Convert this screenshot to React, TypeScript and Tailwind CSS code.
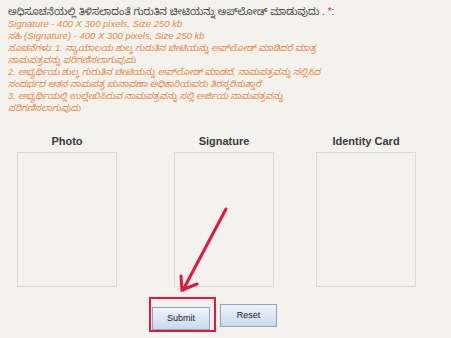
import React from "react";

const line = "whitespace-nowrap text-[9px] italic text-[#e58a4e] h-[12px] leading-[12px]";

export default function App() {
  const kn = { fontFamily: '"Liberation Sans", "Noto Sans Kannada", "Noto Sans", sans-serif' };
  const L = ({ children }: { children: React.ReactNode }) => <span className="text-[9.5px]">{children}</span>;
  return (
    <div className="relative w-[451px] h-[338px] overflow-hidden bg-[#f4f2ec]" style={kn}>
      <div className="pl-[8px] pt-[6px]">
        <div className="whitespace-nowrap text-[10px] text-[#4a4a4a] h-[12px] leading-[12px]">
          ಅಧಿಸೂಚನೆಯಲ್ಲಿ ತಿಳಿಸಲಾದಂತೆ ಗುರುತಿನ ಚೀಟಿಯನ್ನು ಅಪ್‌ಲೋಡ್ ಮಾಡುವುದು . <span className="text-[#d9263a]">*</span>:
        </div>
        <div className={line}><L>Signature - 400 X 300 pixels, Size 250 kb</L></div>
        <div className={line}>ಸಹಿ <L>(Signature) - 400 X 300 pixels, Size 250 kb</L></div>
        <div className={line}>ಸೂಚನೆಗಳು: 1. ನ್ಯಾಯಾಲಯ ಶುಲ್ಕ ಗುರುತಿನ ಚೀಟಿಯನ್ನು ಅಪ್‌ಲೋಡ್ ಮಾಡಿದರೆ ಮಾತ್ರ</div>
        <div className={line}>ನಾಮಪತ್ರವನ್ನು ಪರಿಗಣಿಸಲಾಗುವುದು</div>
        <div className={line}>2. ಅಭ್ಯರ್ಥಿಯ ಶುಲ್ಕ ಗುರುತಿನ ಚೀಟಿಯನ್ನು ಅಪ್‌ಲೋಡ್ ಮಾಡದೆ, ನಾಮಪತ್ರವನ್ನು ಸಲ್ಲಿಸಿದ</div>
        <div className={line}>ಸಂದರ್ಭದ ಆತನ ನಾಮಪತ್ರ ಚುನಾವಣಾ ಅಧಿಕಾರಿಯವರು ತಿರಸ್ಕರಿಸುತ್ತಾರೆ</div>
        <div className={line}>3. ಅಭ್ಯರ್ಥಿಯಲ್ಲಿ ಉಲ್ಲೇಖಿಸಿರುವ ನಾಮಪತ್ರವನ್ನು ಸಲ್ಲಿ ಅರ್ಜಿಯ ನಾಮಪತ್ರವನ್ನು</div>
        <div className={line}>ಪರಿಗಣಿಸಲಾಗುವುದು</div>
      </div>

      <div className="mt-[20px] flex pl-[17px]">
        {[
          { t: "Photo", w: "w-[157px]" },
          { t: "Signature", w: "w-[142px]" },
          { t: "Identity Card", w: "w-[100px]" },
        ].map((c) => (
          <div key={c.t} className={`${c.w} flex flex-col`}>
            <div className="w-[100px] text-center text-[11px] font-bold text-[#3a3a3a] h-[15px] leading-[15px] whitespace-nowrap">
              {c.t}
            </div>
            <div className="mt-[3px] w-[100px] h-[135px] border border-[#dcdad4]" />
          </div>
        ))}
      </div>

      <div className="mt-[10px] flex pl-[149px] gap-[4px]">
        <div className="w-[67px] h-[35px] border-2 border-[#e2183f] pt-[5px] pl-[1px]">
          <button className="w-[58px] h-[23px] border border-[#8fa5bf] bg-gradient-to-b from-[#eef4fb] to-[#c9daee] text-[9px] text-[#222]">
            Submit
          </button>
        </div>
        <button className="mt-[7px] w-[57px] h-[23px] border border-[#8fa5bf] bg-gradient-to-b from-[#eef4fb] to-[#c9daee] text-[9px] text-[#222]">
          Reset
        </button>
      </div>

      <svg className="absolute left-0 top-0 pointer-events-none" width="451" height="338">
        <g stroke="#e2183f" strokeWidth="3" strokeLinecap="round" fill="none">
          <line x1="226" y1="209" x2="183" y2="290" />
          <polyline points="181,276 182,290 197,284" strokeLinejoin="miter" />
        </g>
      </svg>
    </div>
  );
}
